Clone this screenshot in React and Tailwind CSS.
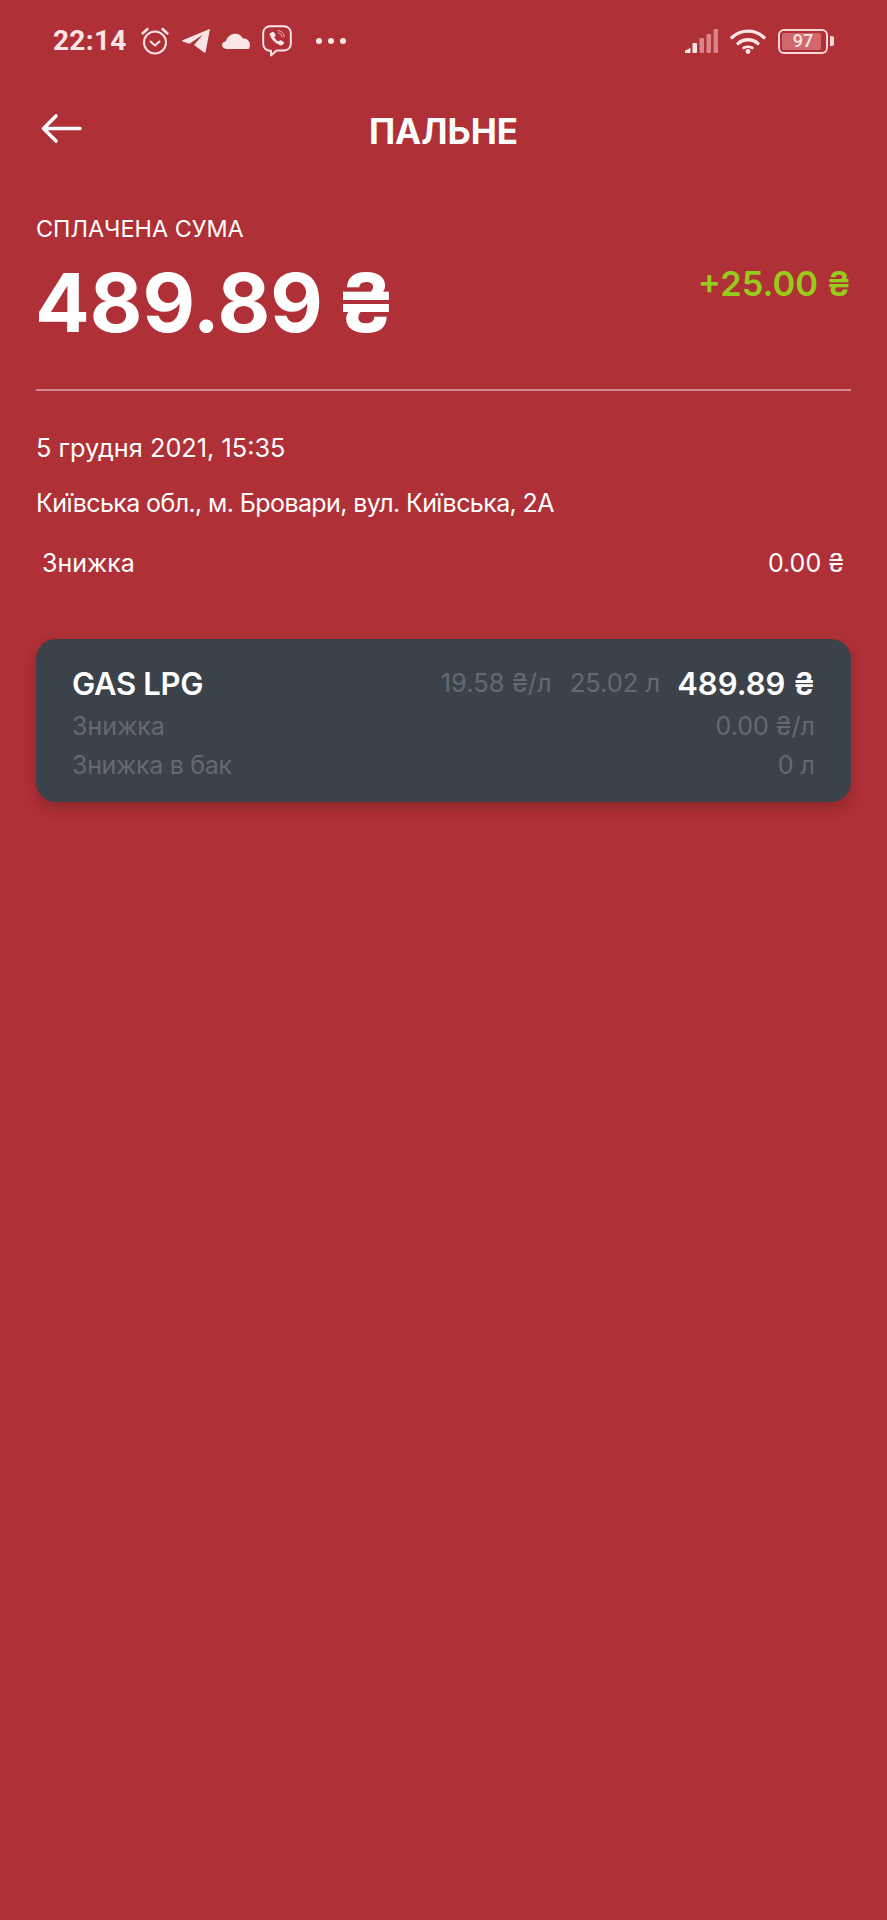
import React from "react";

const Alarm = () => (
  <svg width="30" height="30" viewBox="0 0 30 30" fill="none" stroke="#fbe6e7" strokeLinecap="round" strokeLinejoin="round">
    <circle cx="15" cy="16.5" r="11" strokeWidth="2" />
    <path d="M10.5 15.5 15 19.5l4.5-4" strokeWidth="2" />
    <path d="M2.5 7.5 7.5 3M27.5 7.5 22.5 3" strokeWidth="2.4" />
  </svg>
);
const Telegram = () => (
  <svg width="28" height="26" viewBox="0 0 28 26" fill="#fbe6e7">
    <path d="M27.6 1 .6 12.2c-.7.3-.7 1 0 1.2l7 2.3L21 6.5 12 17l10.2 7.6c.6.4 1.2.2 1.4-.6L27.9 1.6c.1-.5-.1-.7-.3-.6z" />
  </svg>
);
const Cloud = () => (
  <svg width="28" height="16" viewBox="0 0 28 16" fill="#fbe6e7">
    <path d="M4.500 16C2 16 0 14.300 0 12.100c0-2 1.700-3.700 3.900-3.900C4.700 4.800 7.700 1.800 11.900.8c3.900-.7 7.300 1 8.700 4.400 4.100-.2 7.400 2.800 7.400 6.500 0 1.800-.6 3.200-1.400 4.300H4.500z" />
  </svg>
);
const Viber = () => (
  <svg width="30" height="32" viewBox="0 0 30 32" fill="none" stroke="#fbe6e7" strokeLinecap="round" strokeLinejoin="round">
    <path d="M8 1.200h14c3.600 0 6.800 2.800 6.800 6.600v11.200c0 3.800-3.200 6.500-6.800 6.500H14.500L9 30.500v-4.700H8c-3.700-.2-6.800-3-6.800-6.800V7.800C1.200 4 4.400 1.200 8 1.200z" strokeWidth="1.900" />
    <path d="M9.500 7.500c1-1 2-.8 2.600 0l1.300 2c.4.700.3 1.300-.2 1.800l-.9.800c.8 2 2.400 3.500 4.400 4.500l.9-1c.5-.5 1.100-.6 1.800-.2l2 1.400c.7.600.8 1.600-.1 2.500-1 1-2.300 1.400-3.600.8-5-2-8.200-5.300-9.900-10-.4-1-.1-1.800 1.700-2.600z" fill="#fbe6e7" stroke="none" />
    <path d="M16 5.500c3.500.2 6 2.800 6.200 6.300M16.300 8c2 .2 3.400 1.600 3.600 3.600" strokeWidth="1" opacity="0.75" />
  </svg>
);
const Signal = () => (
  <svg width="33" height="24" viewBox="0 0 33 24">
    <path d="M0 24v-2.500L5.500 19v5z" fill="#fbe6e7" />
    <rect x="7.500" y="14" width="4.500" height="10" rx="1" fill="#fbe6e7" />
    <rect x="14.500" y="9" width="4.500" height="15" rx="1" fill="#d98489" />
    <rect x="21.500" y="5" width="4.500" height="19" rx="1" fill="#d98489" />
    <rect x="28.500" y="0" width="4.500" height="24" rx="1" fill="#d98489" />
  </svg>
);
const Wifi = () => (
  <svg width="36" height="26" viewBox="0 0 36 26" fill="none" stroke="#fbe6e7" strokeWidth="3.400" strokeLinecap="round">
    <path d="M2 9.500C11 1 25 1 34 9.500" />
    <path d="M8 15.500c5.800-5 14.200-5 20 0" />
    <path d="M13.500 20c2.800-1.500 6.200-1.500 9 0" strokeWidth="2.600" />
    <circle cx="18" cy="23.500" r="2.400" fill="#fbe6e7" stroke="none" />
  </svg>
);
const Battery = () => (
  <div className="flex items-center">
    <div className="relative w-[50px] h-[25px] rounded-[6px] border-[2.5px] border-[#f6d5d7] p-[2px]">
      <div className="w-[92%] h-full rounded-[2px] bg-[#d1686e]" />
      <span className="absolute inset-0 flex items-center justify-center text-[18px] leading-none font-medium text-[#fbe6e7] font-['Roboto',sans-serif]">97</span>
    </div>
    <div className="ml-[2px] w-[4px] h-[10px] rounded-r-[2px] bg-[#f6d5d7]" />
  </div>
);

export default function App() {
  return (
    <div className="w-[887px] min-h-[1920px] bg-[#af3036] font-['Inter',sans-serif] text-white">
      <div className="h-[82px] flex items-center justify-between pl-[53px] pr-[53px]">
        <div className="flex items-center">
          <span className="text-[28px] leading-none font-bold text-[#fbe6e7] font-['Roboto',sans-serif] tracking-[0.3px]">22:14</span>
          <div className="ml-[13px] flex items-center gap-[12px]">
            <Alarm />
            <Telegram />
            <Cloud />
            <Viber />
          </div>
          <div className="ml-[24px] flex items-center gap-[6px]">
            <span className="w-[6px] h-[6px] rounded-full bg-[#fbe6e7]" />
            <span className="w-[6px] h-[6px] rounded-full bg-[#fbe6e7]" />
            <span className="w-[6px] h-[6px] rounded-full bg-[#fbe6e7]" />
          </div>
        </div>
        <div className="flex items-center gap-[12px]">
          <Signal />
          <Wifi />
          <Battery />
        </div>
      </div>

      <div className="relative h-[98px] flex items-center justify-center">
        <svg className="absolute left-[40px] top-[31px]" width="44" height="32" viewBox="0 0 44 32" fill="none" stroke="#ffffff" strokeWidth="3.600" strokeLinecap="round" strokeLinejoin="round">
          <path d="M40 15.500H4M16 3 3.500 15.500 16 28" />
        </svg>
        <h1 className="text-[35px] leading-none font-bold">ПАЛЬНЕ</h1>
      </div>

      <div className="px-[36px]">
        <div className="mt-[36px] text-[23.4px] leading-[26px]">СПЛАЧЕНА СУМА</div>
        <div className="flex items-start justify-between mt-[19px]">
          <div className="-ml-[1px] text-[81px] leading-[84px] font-bold">
            489.89<span className="ml-[-6px]"> ₴</span>
          </div>
          <div className="mt-[1px] text-[34.5px] leading-[44px] font-semibold text-[#97cb1c]">+25.00 ₴</div>
        </div>
        <div className="mt-[44px] h-[2px] bg-[#d58a8e]" />
        <div className="mt-[43px] text-[25.3px] leading-[28px]">5 грудня 2021, 15:35</div>
        <div className="mt-[27px] text-[25px] leading-[28px] tracking-[-0.6px]">Київська обл., м. Бровари, вул. Київська, 2А</div>
        <div className="mt-[32px] pl-[6px] pr-[7px] flex justify-between text-[25px] leading-[28px]">
          <span>Знижка</span>
          <span>0.00 ₴</span>
        </div>

        <div className="mt-[62px] h-[163px] rounded-[20px] bg-[#3c4249] shadow-[0_6px_14px_rgba(0,0,0,0.18)] px-[36px] pt-[25px]">
          <div className="flex items-center justify-between h-[38px]">
            <span className="text-[31px] leading-none font-semibold tracking-[-0.3px]">GAS LPG</span>
            <div className="flex items-center">
              <span className="text-[25.5px] leading-none text-[#646a70]">19.58 ₴/л</span>
              <span className="ml-[18px] text-[25.5px] leading-none text-[#646a70]">25.02 л</span>
              <span className="ml-[17px] text-[31px] leading-none font-semibold">489.89 ₴</span>
            </div>
          </div>
          <div className="mt-[5px] flex justify-between text-[25px] leading-[39px] text-[#646a70]">
            <span>Знижка</span>
            <span>0.00 ₴/л</span>
          </div>
          <div className="flex justify-between text-[25px] leading-[39px] text-[#646a70]">
            <span className="tracking-[-0.3px]">Знижка в бак</span>
            <span>0 л</span>
          </div>
        </div>
      </div>
    </div>
  );
}
